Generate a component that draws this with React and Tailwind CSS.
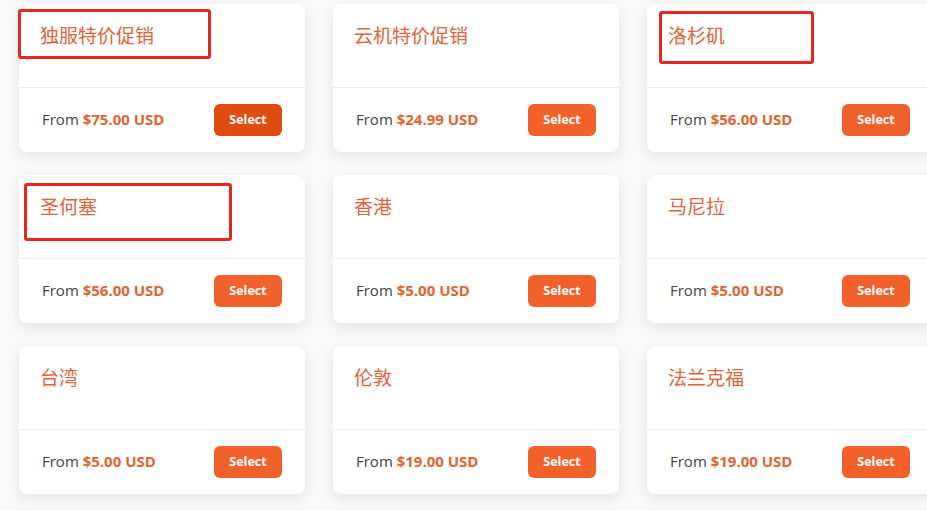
const plans = [
  { name: "独服特价促销", price: "$75.00 USD", active: true },
  { name: "云机特价促销", price: "$24.99 USD" },
  { name: "洛杉矶", price: "$56.00 USD" },
  { name: "圣何塞", price: "$56.00 USD" },
  { name: "香港", price: "$5.00 USD" },
  { name: "马尼拉", price: "$5.00 USD" },
  { name: "台湾", price: "$5.00 USD" },
  { name: "伦敦", price: "$19.00 USD" },
  { name: "法兰克福", price: "$19.00 USD" },
];

function PlanCard({ plan }) {
  return (
    <div className="w-[286px] rounded-lg bg-white shadow-[0_4px_14px_rgba(0,0,0,0.09)]">
      <div className="h-[84px] px-[21px] pt-[18px] border-b border-[#ececec]">
        <h3 className="text-[19px] leading-7 text-[#de6338]">{plan.name}</h3>
      </div>
      <div className="h-[64px] px-[23px] flex items-center justify-between">
        <p className="text-[15px] leading-5 text-[#444] -mt-[2px]">
          From <span className="font-bold text-[#e0642f]">{plan.price}</span>
        </p>
        <button
          className={
            plan.active
              ? "h-[32px] w-[68px] rounded-md bg-[#e04b10] text-[12.5px] font-bold text-white"
              : "h-[32px] w-[68px] rounded-md bg-[#f3612a] text-[12.5px] font-bold text-white"
          }
        >
          Select
        </button>
      </div>
    </div>
  );
}

export default function App() {
  return (
    <div
      className="relative w-[927px] h-[511px] overflow-hidden bg-[#f9f9f9] pl-[19px] pt-[4px]"
      style={{ fontFamily: "'Open Sans', 'Noto Sans CJK SC', sans-serif" }}
    >
      <div className="grid grid-cols-[286px_286px_286px] gap-x-[28px] gap-y-[23px]">
        {plans.map((plan) => (
          <PlanCard key={plan.name} plan={plan} />
        ))}
      </div>

      {/* red annotation boxes */}
      <div className="absolute left-[18px] top-[9px] w-[193px] h-[50px] border-[3px] border-[#e8261f] rounded-[3px]" />
      <div className="absolute left-[659px] top-[11px] w-[155px] h-[53px] border-[3px] border-[#e8261f] rounded-[3px]" />
      <div className="absolute left-[24px] top-[183px] w-[208px] h-[58px] border-[3px] border-[#e8261f] rounded-[3px]" />
    </div>
  );
}
